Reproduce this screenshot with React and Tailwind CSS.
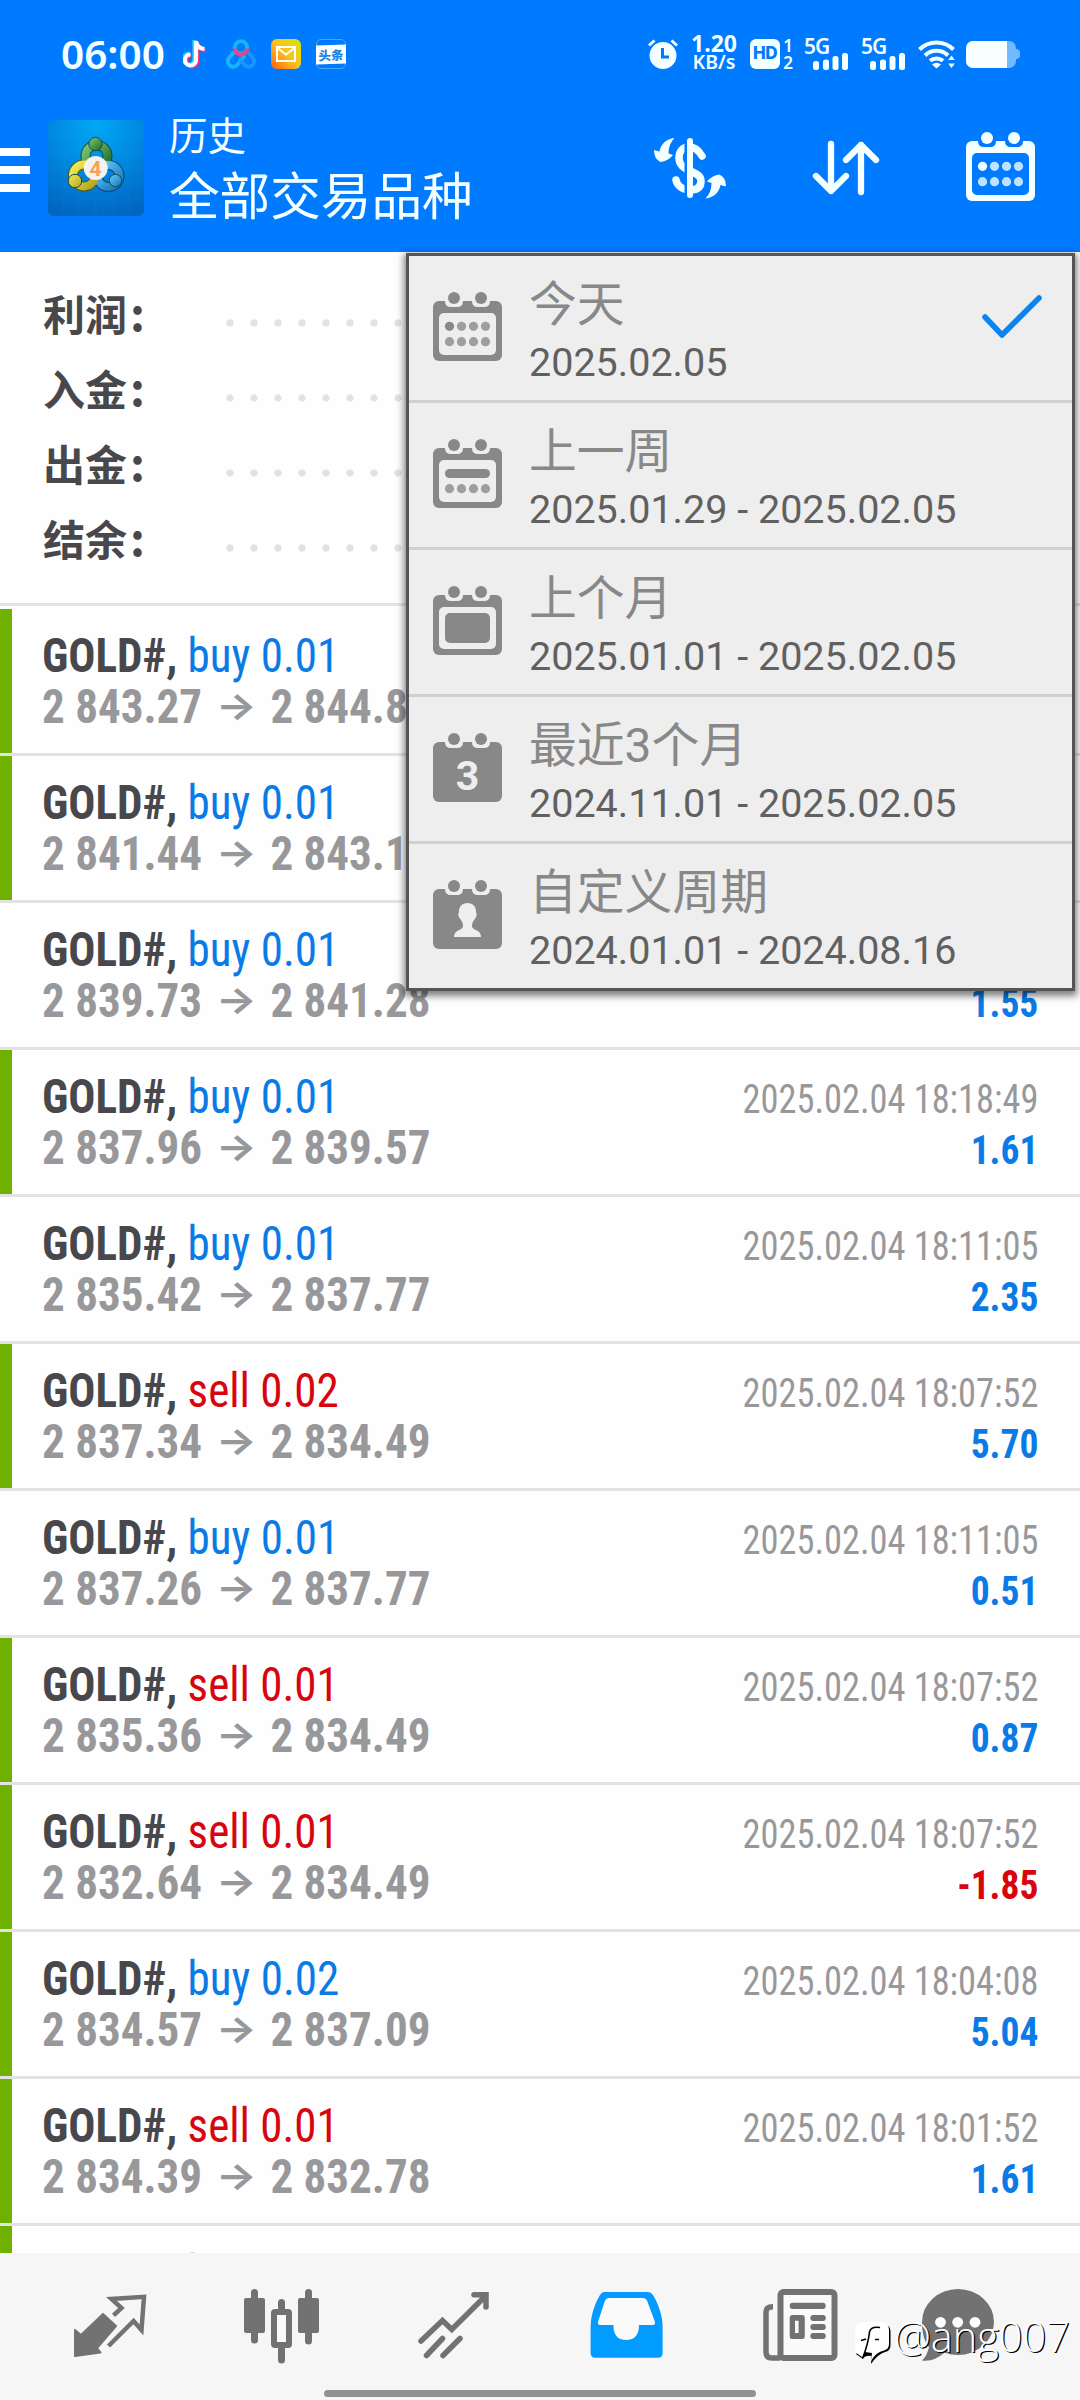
import clsx from 'clsx'

const deals = [
  { side: 'buy', volume: '0.01', from: '2 843.27', to: '2 844.87', marked: true },
  { side: 'buy', volume: '0.01', from: '2 841.44', to: '2 843.11', marked: true },
  { side: 'buy', volume: '0.01', from: '2 839.73', to: '2 841.28', profit: '1.55' },
  { side: 'buy', volume: '0.01', from: '2 837.96', to: '2 839.57', time: '2025.02.04 18:18:49', profit: '1.61', marked: true },
  { side: 'buy', volume: '0.01', from: '2 835.42', to: '2 837.77', time: '2025.02.04 18:11:05', profit: '2.35' },
  { side: 'sell', volume: '0.02', from: '2 837.34', to: '2 834.49', time: '2025.02.04 18:07:52', profit: '5.70', marked: true },
  { side: 'buy', volume: '0.01', from: '2 837.26', to: '2 837.77', time: '2025.02.04 18:11:05', profit: '0.51' },
  { side: 'sell', volume: '0.01', from: '2 835.36', to: '2 834.49', time: '2025.02.04 18:07:52', profit: '0.87', marked: true },
  { side: 'sell', volume: '0.01', from: '2 832.64', to: '2 834.49', time: '2025.02.04 18:07:52', profit: '-1.85', marked: true },
  { side: 'buy', volume: '0.02', from: '2 834.57', to: '2 837.09', time: '2025.02.04 18:04:08', profit: '5.04', marked: true },
  { side: 'sell', volume: '0.01', from: '2 834.39', to: '2 832.78', time: '2025.02.04 18:01:52', profit: '1.61', marked: true },
  { side: 'buy', volume: '0.01', marked: true },
]

const periods = [
  { kind: 'day', title: '今天', range: '2025.02.05', selected: true },
  { kind: 'week', title: '上一周', range: '2025.01.29 - 2025.02.05' },
  { kind: 'month', title: '上个月', range: '2025.01.01 - 2025.02.05' },
  { kind: 'quarter', title: '最近3个月', range: '2024.11.01 - 2025.02.05' },
  { kind: 'custom', title: '自定义周期', range: '2024.01.01 - 2024.08.16' },
]

const summary = ['利润', '入金', '出金', '结余']

function CalendarIcon({ kind, hole, className }) {
  const framed = kind === 'day' || kind === 'week' || kind === 'month'
  const rows = kind === 'day' ? [34.3, 49.7] : kind === 'week' ? [49.7] : []
  return (
    <svg viewBox="0 0 69 69" fill="currentColor" className={clsx('h-[69px] w-[69px] shrink-0', className)}>
      <rect x="0" y="9" width="69" height="60" rx="6" />
      <path d="M12 7H30V9Q30 15 24 15H18Q12 15 12 9ZM39 7H57V9Q57 15 51 15H45Q39 15 39 9Z" fill={hole} />
      <circle cx="21" cy="6" r="6" />
      <circle cx="48" cy="6" r="6" />
      {framed && <rect x="6" y="21" width="57" height="42" rx="5" fill={hole} />}
      {rows.map((y, r) =>
        [16.5, 28.5, 40.5, 52.5].map((x, c) => (
          <circle key={`${x}-${y}`} cx={x} cy={y} r="4.6" opacity={kind === 'day' && r === 0 && c === 0 ? 1 : 0.78} />
        ))
      )}
      {kind === 'week' && <rect x="12" y="30" width="45" height="9" rx="4.5" />}
      {kind === 'month' && <rect x="12" y="27" width="45" height="30" rx="5" />}
      {kind === 'quarter' && (
        <text x="34.5" y="57" textAnchor="middle" fontSize="41" fontWeight="700" fill={hole} className="font-['Roboto',sans-serif]">3</text>
      )}
      {kind === 'custom' && (
        <path d="M34.5 23C40 23 43.5 27 43 32.5Q44.5 34 43 37Q42 39 41 40Q39 42.5 39 46Q39 48.5 43 50Q48 52 48 57H21Q21 52 26 50Q30 48.5 30 46Q30 42.5 28 40Q27 39 26 37Q24.5 34 26 32.5C25.5 27 29 23 34.5 23Z" fill={hole} />
      )}
    </svg>
  )
}

function SignalIcon() {
  return (
    <div className="relative h-[34px] w-[46px]">
      <span className="absolute -top-[1px] left-0 font-['Noto_Sans',sans-serif] text-[21px] leading-[20px] font-semibold tracking-[-1px]">5G</span>
      <svg viewBox="0 0 46 34" fill="currentColor" className="h-[34px] w-[46px]">
        <rect x="9" y="24" width="6" height="9" rx="2.5" />
        <rect x="19" y="22.5" width="6" height="10.5" rx="2.5" />
        <rect x="28.5" y="19" width="6" height="14" rx="2.5" />
        <rect x="38" y="16" width="6" height="17" rx="2.5" />
      </svg>
    </div>
  )
}

function StatusBar() {
  return (
    <div className="flex h-[108px] items-center text-[#f4ffff]">
      <span className="ml-[61px] w-[122px] font-['Noto_Sans',sans-serif] text-[40.5px] leading-[40px] font-semibold">06:00</span>
      <svg viewBox="0 0 24 30" className="h-[30px] w-[24px]">
        <g fill="none" strokeWidth="4.2">
          <path d="M12.5 1V20A5.5 5.5 0 1 1 7 14.5M12.5 2Q14 9 21 9.5" stroke="#25d5f5" transform="translate(-1 0)" />
          <path d="M13.5 2V21A5.5 5.5 0 1 1 8 15.5M13.5 3Q15 10 22 10.5" stroke="#f0326c" transform="translate(1 1)" />
          <path d="M13 2V21A5.5 5.5 0 1 1 7.5 15.5M13 3Q14.5 9.5 21.5 10" stroke="#fff" />
        </g>
      </svg>
      <svg viewBox="0 0 30 30" className="ml-[19px] h-[30px] w-[30px]" fill="none" strokeWidth="4">
        <path d="M9 12L3.5 18.5A5.4 5.4 0 1 0 12 25L19 16" stroke="#16b4fb" />
        <path d="M21 12L26.5 18.5A5.4 5.4 0 1 1 18 25L13 19" stroke="#1597fb" />
        <circle cx="15" cy="8.5" r="6.2" stroke="#16b4fb" />
        <path d="M8.8 9.5A6.2 6.2 0 0 0 21.2 9.5" stroke="#e8447e" />
      </svg>
      <div className="ml-[15px] flex h-[30px] w-[30px] items-center justify-center rounded-[6px] bg-linear-to-tr from-[#ff5a10] via-[#fcc01a] to-[#d6e400]">
        <svg viewBox="0 0 20 16" className="h-[16px] w-[20px]" fill="none" stroke="#fff" strokeWidth="2">
          <path d="M1 1H19V15H1ZM1.5 2L10 8.5L18.5 2" />
        </svg>
      </div>
      <div className="ml-[15px] flex h-[30px] w-[30px] items-center justify-center rounded-[5px] border border-[#48a8f4]">
        <span className="w-[30px] shrink-0 -skew-y-2 bg-white text-center font-['Noto_Sans_CJK_SC',sans-serif] text-[12.5px] leading-[19px] font-black text-[#1684e8]">头条</span>
      </div>

      <svg viewBox="0 0 30 30" className="ml-[302px] h-[30px] w-[30px]" fill="currentColor">
        <circle cx="15" cy="16.5" r="13.5" />
        <path d="M1 6.5L6.5 1.5M29 6.5L23.5 1.5" stroke="currentColor" strokeWidth="3" />
        <path d="M14.500 9V18H21" stroke="#007aff" strokeWidth="3" fill="none" />
      </svg>
      <div className="ml-[13px] flex w-[46px] flex-col items-center pb-[3px] font-['Noto_Sans',sans-serif]">
        <span className="text-[23px] leading-[19px] font-bold">1.20</span>
        <span className="text-[19.5px] leading-[18px] font-semibold">KB/s</span>
      </div>
      <span className="ml-[13px] flex h-[30px] w-[30px] items-center justify-center rounded-[6px] bg-[#f4ffff] font-['Inter',sans-serif] text-[17px] font-extrabold tracking-tight text-[#007aff]">HD</span>
      <div className="ml-[2px] flex w-[12px] flex-col items-center font-['Noto_Sans',sans-serif] text-[17px] leading-[17px] font-semibold">
        <span>1</span>
        <span>2</span>
      </div>
      <div className="ml-[10px] flex gap-[11px]">
        <SignalIcon />
        <SignalIcon />
      </div>
      <svg viewBox="0 0 38 30" className="ml-[11px] h-[30px] w-[38px]" fill="none" stroke="currentColor" strokeWidth="4">
        <path d="M1.5 10.5A24 24 0 0 1 35.5 10.5M7 16.5A16.5 16.5 0 0 1 30 16.5M12 21.8A10 10 0 0 1 25 21.8" />
        <path d="M18.5 29.5L14 25.5Q18.5 22 23 25.5Z" fill="currentColor" stroke="none" />
        <path d="M33.5 16.5L36.8 21H30.2ZM33.5 29L30.2 24.5H36.8Z" fill="currentColor" stroke="none" />
      </svg>
      <div className="ml-[10px] flex items-center">
        <div className="h-[27px] w-[50px] overflow-hidden rounded-[7px] bg-[#72baff]">
          <div className="h-full w-[41px] bg-[#f8ffff]" />
        </div>
        <div className="h-[10px] w-[4px] rounded-r-full bg-[#72baff]" />
      </div>
    </div>
  )
}

function AppLogo() {
  return (
    <svg viewBox="0 0 96 96" className="h-[96px] w-[96px]">
      <defs>
        <radialGradient id="logoBg" cx="50%" cy="5%" r="100%">
          <stop offset="0" stopColor="#00a8f6" />
          <stop offset="0.5" stopColor="#0087de" />
          <stop offset="1" stopColor="#0064c0" />
        </radialGradient>
        <linearGradient id="logoGreen" x1="0" y1="0" x2="1" y2="1">
          <stop offset="0" stopColor="#7cc878" />
          <stop offset="1" stopColor="#1d6b2c" />
        </linearGradient>
        <linearGradient id="logoYellow" x1="0" y1="0" x2="1" y2="1">
          <stop offset="0" stopColor="#f6ee50" />
          <stop offset="1" stopColor="#b0a41c" />
        </linearGradient>
        <linearGradient id="logoBlue" x1="0" y1="0" x2="1" y2="1">
          <stop offset="0" stopColor="#6ccef6" />
          <stop offset="1" stopColor="#0f74ba" />
        </linearGradient>
      </defs>
      <rect width="96" height="96" rx="6" fill="url(#logoBg)" />
      <path d="M16 0V96M32 0V96M48 0V96M64 0V96M80 0V96M0 16H96M0 32H96M0 48H96M0 64H96M0 80H96" stroke="#3db4f0" strokeOpacity="0.1" />
      <g fill="none">
        <circle cx="48.5" cy="36" r="11" stroke="#174f33" strokeWidth="10" />
        <circle cx="36" cy="55.5" r="11" stroke="#4e5a1c" strokeWidth="10" />
        <circle cx="60.5" cy="56" r="11" stroke="#0c4677" strokeWidth="10" />
        <circle cx="48.5" cy="36" r="11" stroke="url(#logoGreen)" strokeWidth="8" />
        <circle cx="60.5" cy="56" r="11" stroke="url(#logoBlue)" strokeWidth="8" />
        <circle cx="36" cy="55.5" r="11" stroke="url(#logoYellow)" strokeWidth="8" />
      </g>
      <g strokeWidth="1" stroke="#1c4a4a">
        <circle cx="47.5" cy="24" r="6.7" fill="url(#logoGreen)" />
        <circle cx="27" cy="61" r="6.7" fill="url(#logoYellow)" />
        <circle cx="67.5" cy="60.5" r="6.2" fill="url(#logoBlue)" />
      </g>
      <circle cx="47.7" cy="48" r="12" fill="#f5f3f0" />
      <text x="47.5" y="55.5" textAnchor="middle" fontSize="21" fontWeight="700" fill="#f5a057" className="font-['Roboto',sans-serif]">4</text>
    </svg>
  )
}

function Header() {
  return (
    <header className="h-[252px] bg-[#007aff]">
      <StatusBar />
      <div className="flex items-start pt-[12px] text-[#f4ffff]">
        <div className="mt-[28px] flex w-[30px] flex-col gap-[10px]">
          <div className="h-[8px] bg-white" />
          <div className="h-[8px] bg-white" />
          <div className="h-[8px] bg-white" />
        </div>
        <div className="ml-[18px]">
          <AppLogo />
        </div>
        <div className="ml-[25px] flex w-[481px] flex-col font-['Noto_Sans_CJK_SC',sans-serif] font-normal">
          <span className="-mt-[13px] text-[38.5px] leading-[52px]">历史</span>
          <span className="mt-[4px] text-[50.6px] leading-[60px]">全部交易品种</span>
        </div>
        <svg viewBox="0 0 80 66" className="mt-[15px] h-[66px] w-[80px]" fill="currentColor">
          <path d="M52 21C48 14 43 12 39 12 32 12 29 17 29 23 29 30 34 33 40 36 47 39 51 41 51 46 51 53 46 55 40 55 33 55 27 51 26 45" fill="none" stroke="currentColor" strokeWidth="7.5" strokeLinecap="round" />
          <path d="M38 6V60" stroke="#007aff" strokeWidth="7" />
          <path d="M40 6V60" stroke="currentColor" strokeWidth="6" strokeLinecap="round" />
          <path d="M24.5 3C16 4 11 9 9.5 16.5L4 15Q4 24 10.5 27Q18 26 23 20L18.5 18.5Q18.5 9 24.5 3Z" />
          <path d="M24.5 3C16 4 11 9 9.5 16.5L4 15Q4 24 10.5 27Q18 26 23 20L18.5 18.5Q18.5 9 24.5 3Z" transform="rotate(180 40 33.2)" />
        </svg>
        <svg viewBox="0 0 70 58" className="mt-[20px] ml-[82px] h-[58px] w-[70px]" fill="none" stroke="currentColor" strokeWidth="6.3" strokeLinecap="round" strokeLinejoin="round">
          <path d="M19 4V51M4 36L19 51L34 36M49 52V5M34 20L49 5L64 20" />
        </svg>
        <CalendarIcon kind="day" hole="#007aff" className="mt-[12px] ml-[84px]" />
      </div>
    </header>
  )
}

function Summary() {
  return (
    <div className="h-[351px] pt-[25px] pl-[43px]">
      {summary.map((label) => (
        <div key={label} className="flex h-[75px] items-center">
          <span className="-mt-[6px] w-[175px] font-['Noto_Sans_CJK_SC',sans-serif] text-[42px] leading-[69px] font-bold text-[#48484c]">
            {label}
            <span className="ml-[3px] text-[46px]">:</span>
          </span>
          <div className="mt-[17px] h-[8px] flex-1 bg-[radial-gradient(circle_at_12px_4px,#e2e2e2_3.200px,transparent_4.200px)] bg-size-[24px_8px]" />
        </div>
      ))}
    </div>
  )
}

function DealRow({ deal }) {
  const loss = deal.profit?.startsWith('-')
  return (
    <div className="flex h-[147px] border-b-[3px] border-[#e3e3e3] font-['Roboto_Condensed','Roboto',sans-serif] [font-stretch:75%]">
      <div className={clsx('w-[12px]', deal.marked && 'bg-[#6fb100]')} />
      <div className="flex flex-1 justify-between pr-[42px] pl-[30px] whitespace-nowrap">
        <div className="origin-left scale-x-[0.938] pt-[21px] text-[48px] leading-[51px]">
          <div>
            <span className="font-bold text-[#48484c]">GOLD#,</span>{' '}
            <span className={clsx('font-[450]', deal.side === 'buy' ? 'text-[#0a7be6]' : 'text-[#d8050f]')}>{deal.side} {deal.volume}</span>
          </div>
          {deal.from && (
            <div className="flex font-bold text-[#98989b]">
              {deal.from}
              <span className="w-[73px] -translate-y-[1px] scale-y-[0.8] text-center font-['Inter',sans-serif] text-[46px] font-bold">→</span>
              {deal.to}
            </div>
          )}
        </div>
        <div className="pt-[24px] text-right text-[40px] leading-[51px]">
          <div className="h-[51px] origin-right scale-x-[0.909] font-[430] text-[#98989b]">{deal.time}</div>
          <div className={clsx('origin-right scale-x-[0.937] font-bold', loss ? 'text-[#d8050f]' : 'text-[#0a7be6]')}>{deal.profit}</div>
        </div>
      </div>
    </div>
  )
}

function PeriodMenu() {
  return (
    <div className="absolute top-[253px] left-[406px] w-[669px] divide-y-[3px] divide-[#d0d0d0] border-[3px] border-[#555] bg-[#eee] shadow-[0_3px_7px_2px_rgba(0,0,0,0.5)]">
      {periods.map((p) => (
        <div key={p.kind} className="box-content flex h-[144px] pl-[24px]">
          <CalendarIcon kind={p.kind} hole="#eee" className="mt-[36px] text-[#888]" />
          <div className="ml-[27px] flex-1 whitespace-nowrap">
            <div className="mt-[24px] font-['Roboto','Noto_Sans_CJK_SC',sans-serif] text-[47.8px] leading-[51px] text-[#888]">{p.title}</div>
            <div className="mt-[6px] font-['Roboto',sans-serif] text-[39.5px] leading-[51px] text-[#606060]">{p.range}</div>
          </div>
          {p.selected && (
            <svg viewBox="0 0 62 46" className="mt-[37px] mr-[29px] h-[46px] w-[62px]" fill="none" stroke="#0a84f0" strokeWidth="5.5" strokeLinecap="round" strokeLinejoin="round">
              <path d="M4 24L21 42L58 5" />
            </svg>
          )}
        </div>
      ))}
    </div>
  )
}

function TabBar() {
  return (
    <nav className="relative h-[147px] bg-[#f6f6f6] text-[#727272]">
      <div className="flex gap-[92px] pt-[32px] pl-[70px]">
        <svg viewBox="0 0 80 80" className="h-[80px] w-[80px]" fill="currentColor">
          <path d="M5 45L11 50L33 29L46 41L27 63L30.5 67.5L5 71Z" stroke="currentColor" strokeWidth="2" strokeLinejoin="round" />
          <path d="M43.5 30.3L51.5 23L41.5 14L74 11.8L71.5 45L63.6 36L38.5 61" fill="none" stroke="currentColor" strokeWidth="4.5" />
        </svg>
        <svg viewBox="0 0 80 80" className="ml-[1px] h-[80px] w-[80px]" fill="currentColor">
          <rect x="1" y="13" width="21" height="35" rx="2" />
          <rect x="55" y="13" width="21" height="35" rx="2" />
          <rect x="31" y="27" width="15" height="33" rx="1" fill="#fafafa" stroke="currentColor" strokeWidth="6" />
          <path d="M11.5 7.5V55M65.5 7.5V56M38.5 17.5V26M38.5 62V75" stroke="currentColor" strokeWidth="7" strokeLinecap="round" />
        </svg>
        <svg viewBox="0 0 80 80" className="h-[80px] w-[80px]" fill="none" stroke="currentColor" strokeWidth="5.5" strokeLinecap="round">
          <path d="M6 56L27.5 35.5L36.8 44.5L71 10.5M59 9.8H71V22M11.5 70.5L27.5 53.5M28 70.5L45 53.5" />
        </svg>
        <svg viewBox="0 0 80 80" className="-ml-[2px] h-[80px] w-[80px]" fill="#029bff">
          <path d="M19 7H63Q66 7 68 10C74 20 77.6 32 77.6 42V68Q77.6 72.7 73 72.7H10Q5.6 72.7 5.6 68V42C5.6 32 9 20 15 10Q17 7 19 7Z" />
          <path d="M24 13H58Q61 13 62 15.5L70 37Q70.5 40 68 40H54Q54 55 41 55Q28.4 55 28.4 40H15Q12.5 40 13 37L20 15.5Q21 13 24 13Z" fill="#fafafa" />
        </svg>
        <svg viewBox="0 0 80 80" className="ml-[3px] h-[80px] w-[80px]" fill="currentColor">
          <rect x="20.5" y="7" width="54" height="66" rx="3" fill="#fafafa" stroke="currentColor" strokeWidth="6" />
          <path d="M13 21.8Q6 21.8 6 27V67Q6 73 12 73H20" fill="none" stroke="currentColor" strokeWidth="5.5" />
          <rect x="29.7" y="17.7" width="36" height="6.3" rx="3" />
          <path d="M32 30H42.5Q44.8 30 44.8 32.5V51.5Q44.8 54 42.5 54H32Q29.7 54 29.7 51.5V32.5Q29.7 30 32 30ZM35 35.7V48H38.6V35.7Z" fillRule="evenodd" />
          <rect x="50.3" y="30" width="15.5" height="6" rx="3" />
          <rect x="50.3" y="39" width="15.5" height="6" rx="3" />
          <rect x="50.3" y="48" width="15.5" height="6" rx="3" />
        </svg>
        <svg viewBox="0 0 80 80" className="-ml-[14px] h-[80px] w-[80px]" fill="currentColor">
          <ellipse cx="40" cy="37" rx="36" ry="33" />
          <path d="M4 37Q4 55 11 62Q9 71 4 75.5Q16 77 26 68L40 60Z" />
          <circle cx="22.5" cy="37.3" r="5.4" fill="#fff" />
          <circle cx="39.7" cy="37.3" r="5.4" fill="#fff" />
          <circle cx="57" cy="37.3" r="5.4" fill="#fff" />
        </svg>
      </div>
      {/* Marca de agua del autor */}
      <div className="absolute top-[58px] left-[853px] flex items-start whitespace-nowrap text-white">
        <svg viewBox="0 0 40 56" className="h-[56px] w-[40px]">
          <path d="M30 12.5Q37.5 14 37.5 20V34Q37.5 40 32 41Q25 43 18 53L18.5 45Q12 44 10 48L3 43" fill="#000" />
          <path d="M9 11H29Q36 12 36 19V33Q36 38 31 39.5Q23 41 18 50L19 42L12 41L9 46L2 41V19Q2 12 9 11Z" fill="#fff" />
          <path d="M27 16.5Q18 15 16.5 21Q15.5 31 10.5 45M8 29.5L13 28M22 28.5H26" fill="none" stroke="#000" strokeWidth="1.6" />
        </svg>
        <span className="mt-[1px] ml-[1px] font-['Open_Sans',sans-serif] text-[41.5px] leading-[48px] font-light [text-shadow:1.2px_1.2px_0.3px_#000]">@ang007</span>
      </div>
      <div className="absolute bottom-[3px] left-[324px] h-[7px] w-[432px] rounded-full bg-[#929292]" />
    </nav>
  )
}

export default function App() {
  return (
    <div className="relative flex h-[2400px] w-[1080px] flex-col overflow-hidden bg-[#fefefe]">
      <Header />
      <Summary />
      <div className="h-[1650px] overflow-hidden border-t-[3px] border-[#e3e3e3] pt-[3px]">
        {deals.map((deal, i) => (
          <DealRow key={i} deal={deal} />
        ))}
      </div>
      <TabBar />
      <PeriodMenu />
    </div>
  )
}
